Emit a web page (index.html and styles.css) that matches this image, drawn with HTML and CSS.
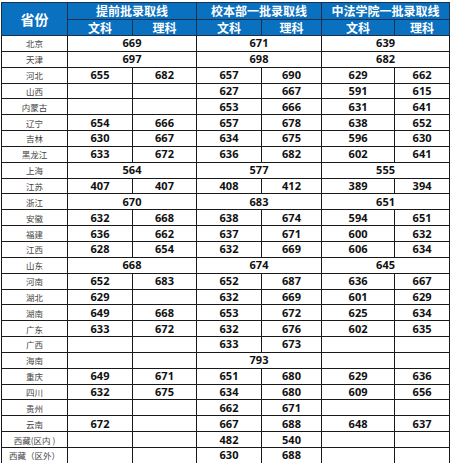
FILE: index.html
```html
<!DOCTYPE html>
<html lang="zh-CN">
<head>
<meta charset="utf-8">
<link rel="stylesheet" href="styles.css">
</head>
<body>
<table class="score">
<colgroup>
<col class="c-prov"><col class="c-a"><col class="c-b"><col class="c-c"><col class="c-d"><col class="c-e"><col class="c-f">
</colgroup>
<thead>
<tr class="h1">
<th rowspan="2" class="prov-h">省份</th>
<th colspan="2">提前批录取线</th>
<th colspan="2">校本部一批录取线</th>
<th colspan="2">中法学院一批录取线</th>
</tr>
<tr class="h2">
<th>文科</th><th>理科</th><th>文科</th><th>理科</th><th>文科</th><th>理科</th>
</tr>
</thead>
<tbody>
<tr><td class="p">北京</td><td colspan="2">669</td><td colspan="2">671</td><td colspan="2">639</td></tr>
<tr><td class="p">天津</td><td colspan="2">697</td><td colspan="2">698</td><td colspan="2">682</td></tr>
<tr><td class="p">河北</td><td>655</td><td>682</td><td>657</td><td>690</td><td>629</td><td>662</td></tr>
<tr><td class="p">山西</td><td></td><td></td><td>627</td><td>667</td><td>591</td><td>615</td></tr>
<tr><td class="p">内蒙古</td><td></td><td></td><td>653</td><td>666</td><td>631</td><td>641</td></tr>
<tr><td class="p">辽宁</td><td>654</td><td>666</td><td>657</td><td>678</td><td>638</td><td>652</td></tr>
<tr><td class="p">吉林</td><td>630</td><td>667</td><td>634</td><td>675</td><td>596</td><td>630</td></tr>
<tr><td class="p">黑龙江</td><td>633</td><td>672</td><td>636</td><td>682</td><td>602</td><td>641</td></tr>
<tr><td class="p">上海</td><td colspan="2">564</td><td colspan="2">577</td><td colspan="2">555</td></tr>
<tr><td class="p">江苏</td><td>407</td><td>407</td><td>408</td><td>412</td><td>389</td><td>394</td></tr>
<tr><td class="p">浙江</td><td colspan="2">670</td><td colspan="2">683</td><td colspan="2">651</td></tr>
<tr><td class="p">安徽</td><td>632</td><td>668</td><td>638</td><td>674</td><td>594</td><td>651</td></tr>
<tr><td class="p">福建</td><td>636</td><td>662</td><td>637</td><td>671</td><td>600</td><td>632</td></tr>
<tr><td class="p">江西</td><td>628</td><td>654</td><td>632</td><td>669</td><td>606</td><td>634</td></tr>
<tr><td class="p">山东</td><td colspan="2">668</td><td colspan="2">674</td><td colspan="2">645</td></tr>
<tr><td class="p">河南</td><td>652</td><td>683</td><td>652</td><td>687</td><td>636</td><td>667</td></tr>
<tr><td class="p">湖北</td><td>629</td><td></td><td>632</td><td>669</td><td>601</td><td>629</td></tr>
<tr><td class="p">湖南</td><td>649</td><td>668</td><td>653</td><td>672</td><td>625</td><td>634</td></tr>
<tr><td class="p">广东</td><td>633</td><td>672</td><td>632</td><td>676</td><td>602</td><td>635</td></tr>
<tr><td class="p">广西</td><td></td><td></td><td>633</td><td>673</td><td></td><td></td></tr>
<tr><td class="p">海南</td><td></td><td></td><td colspan="2">793</td><td></td><td></td></tr>
<tr><td class="p">重庆</td><td>649</td><td>671</td><td>651</td><td>680</td><td>629</td><td>636</td></tr>
<tr><td class="p">四川</td><td>632</td><td>675</td><td>634</td><td>680</td><td>609</td><td>656</td></tr>
<tr><td class="p">贵州</td><td></td><td></td><td>662</td><td>671</td><td></td><td></td></tr>
<tr><td class="p">云南</td><td>672</td><td></td><td>667</td><td>688</td><td>648</td><td>637</td></tr>
<tr><td class="p">西藏(区内 )</td><td></td><td></td><td>482</td><td>540</td><td></td><td></td></tr>
<tr><td class="p">西藏（区外）</td><td></td><td></td><td>630</td><td>688</td><td></td><td></td></tr>
</tbody>
</table>
</body>
</html>
```

FILE: styles.css
```css
html, body {
  background: #ffffff;
}
body {
  margin: 2px 0 0 1px;
  font-family: "Open Sans", "Liberation Sans", "Noto Sans CJK SC", sans-serif;
}
.score {
  border-collapse: collapse;
  table-layout: fixed;
  width: 448px;
}
.c-prov { width: 66px; }
.c-a { width: 65px; }
.c-b { width: 64px; }
.c-c { width: 65px; }
.c-d { width: 60px; }
.c-e { width: 73px; }
.c-f { width: 55px; }

.score th {
  background: #0a70c0;
  color: #ffffff;
  font-family: "Noto Sans CJK SC", sans-serif;
  font-weight: 700;
  font-size: 12px;
  line-height: 12px;
  padding: 0;
  border: 1px solid #1c2f48;
  text-align: center;
  overflow: hidden;
}
.score .h1 th { height: 16px; }
.score .h2 th { height: 15px; }
.score th.prov-h { font-size: 14px; }

.score td {
  height: 14.85px;
  padding: 0;
  border: 1px solid #1a1a1a;
  text-align: center;
  font-family: "Open Sans", "Liberation Sans", sans-serif;
  font-weight: 700;
  font-size: 11px;
  line-height: 12px;
  color: #111111;
  overflow: hidden;
  white-space: nowrap;
}
.score td.p {
  font-family: "Noto Sans CJK SC", sans-serif;
  font-weight: 400;
  font-size: 8.5px;
  color: #444444;
}
```
